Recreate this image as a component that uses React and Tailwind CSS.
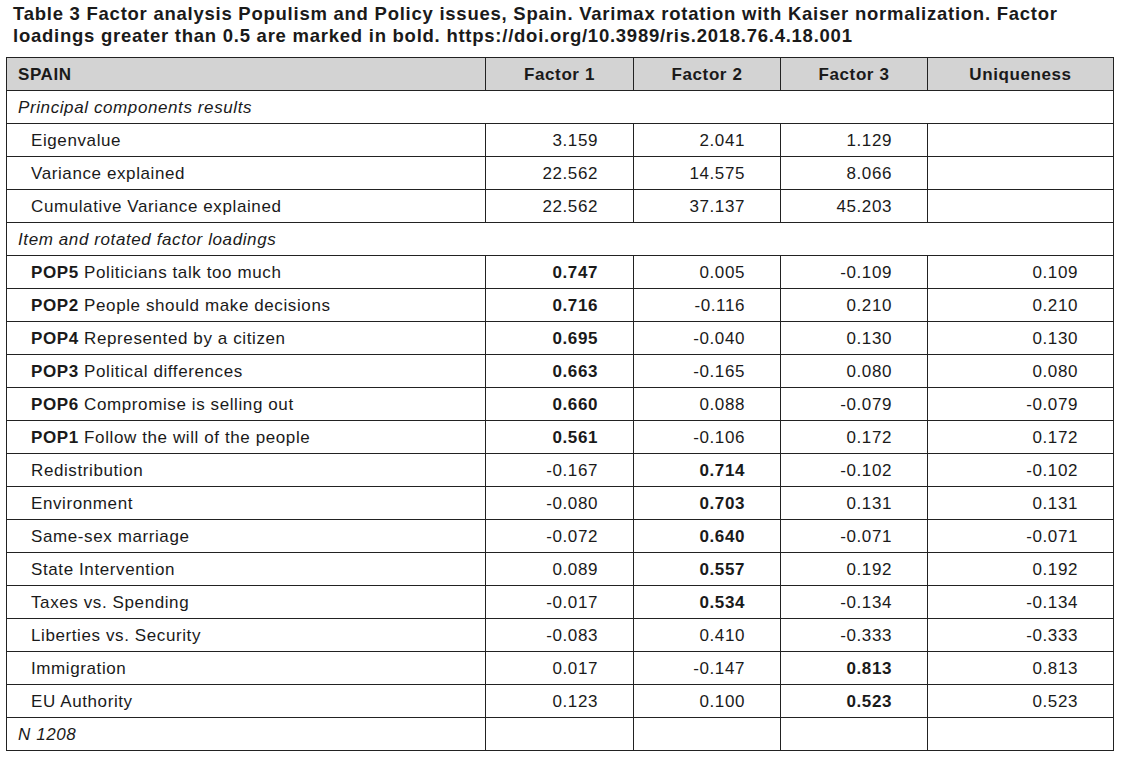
const sections = [
  {
    title: "Principal components results",
    rows: [
      { label: "Eigenvalue", v: ["3.159", "2.041", "1.129", ""] },
      { label: "Variance explained", v: ["22.562", "14.575", "8.066", ""] },
      { label: "Cumulative Variance explained", v: ["22.562", "37.137", "45.203", ""] },
    ],
  },
  {
    title: "Item and rotated factor loadings",
    rows: [
      { code: "POP5", label: "Politicians talk too much", v: ["0.747", "0.005", "-0.109", "0.109"], bold: 0 },
      { code: "POP2", label: "People should make decisions", v: ["0.716", "-0.116", "0.210", "0.210"], bold: 0 },
      { code: "POP4", label: "Represented by a citizen", v: ["0.695", "-0.040", "0.130", "0.130"], bold: 0 },
      { code: "POP3", label: "Political differences", v: ["0.663", "-0.165", "0.080", "0.080"], bold: 0 },
      { code: "POP6", label: "Compromise is selling out", v: ["0.660", "0.088", "-0.079", "-0.079"], bold: 0 },
      { code: "POP1", label: "Follow the will of the people", v: ["0.561", "-0.106", "0.172", "0.172"], bold: 0 },
      { label: "Redistribution", v: ["-0.167", "0.714", "-0.102", "-0.102"], bold: 1 },
      { label: "Environment", v: ["-0.080", "0.703", "0.131", "0.131"], bold: 1 },
      { label: "Same-sex marriage", v: ["-0.072", "0.640", "-0.071", "-0.071"], bold: 1 },
      { label: "State Intervention", v: ["0.089", "0.557", "0.192", "0.192"], bold: 1 },
      { label: "Taxes vs. Spending", v: ["-0.017", "0.534", "-0.134", "-0.134"], bold: 1 },
      { label: "Liberties vs. Security", v: ["-0.083", "0.410", "-0.333", "-0.333"] },
      { label: "Immigration", v: ["0.017", "-0.147", "0.813", "0.813"], bold: 2 },
      { label: "EU Authority", v: ["0.123", "0.100", "0.523", "0.523"], bold: 2 },
    ],
  },
];

const cell = "border border-[#222] h-[33px] p-0 pt-[2px]";

export default function App() {
  return (
    <div className="bg-white w-[1121px] h-[760px] text-[#1a1a1a] font-['Liberation_Sans',Arial,sans-serif]">
      <h1 className="pl-[13px] pt-[3px] text-[18.5px] leading-[22px] tracking-[0.75px] font-bold">
        Table 3 Factor analysis Populism and Policy issues, Spain. Varimax rotation with Kaiser normalization. Factor
        <br />
        loadings greater than 0.5 are marked in bold. https://doi.org/10.3989/ris.2018.76.4.18.001
      </h1>
      <table className="ml-[6px] mt-[10px] border-collapse text-[17px] leading-[20px] tracking-[0.6px] table-fixed w-[1107px]">
        <colgroup>
          <col className="w-[479px]" />
          <col className="w-[148px]" />
          <col className="w-[147px]" />
          <col className="w-[147px]" />
          <col className="w-[186px]" />
        </colgroup>
        <thead>
          <tr className="bg-[#d3d3d3] font-bold">
            <th className={`${cell} text-left pl-[11px]`}>SPAIN</th>
            <th className={cell}>Factor 1</th>
            <th className={cell}>Factor 2</th>
            <th className={cell}>Factor 3</th>
            <th className={cell}>Uniqueness</th>
          </tr>
        </thead>
        <tbody>
          {sections.map((s) => [
            <tr key={s.title}>
              <td colSpan={5} className={`${cell} italic pl-[11px]`}>{s.title}</td>
            </tr>,
            ...s.rows.map((r) => (
              <tr key={r.label}>
                <td className={`${cell} pl-[24px]`}>
                  {r.code && <b>{r.code} </b>}
                  {r.label}
                </td>
                {r.v.map((x, i) => (
                  <td key={i} className={`${cell} text-right pr-[35px] ${r.bold === i ? "font-bold" : ""}`}>
                    {x}
                  </td>
                ))}
              </tr>
            )),
          ])}
          <tr>
            <td className={`${cell} italic pl-[11px]`}>N 1208</td>
            <td className={cell}></td>
            <td className={cell}></td>
            <td className={cell}></td>
            <td className={cell}></td>
          </tr>
        </tbody>
      </table>
    </div>
  );
}
